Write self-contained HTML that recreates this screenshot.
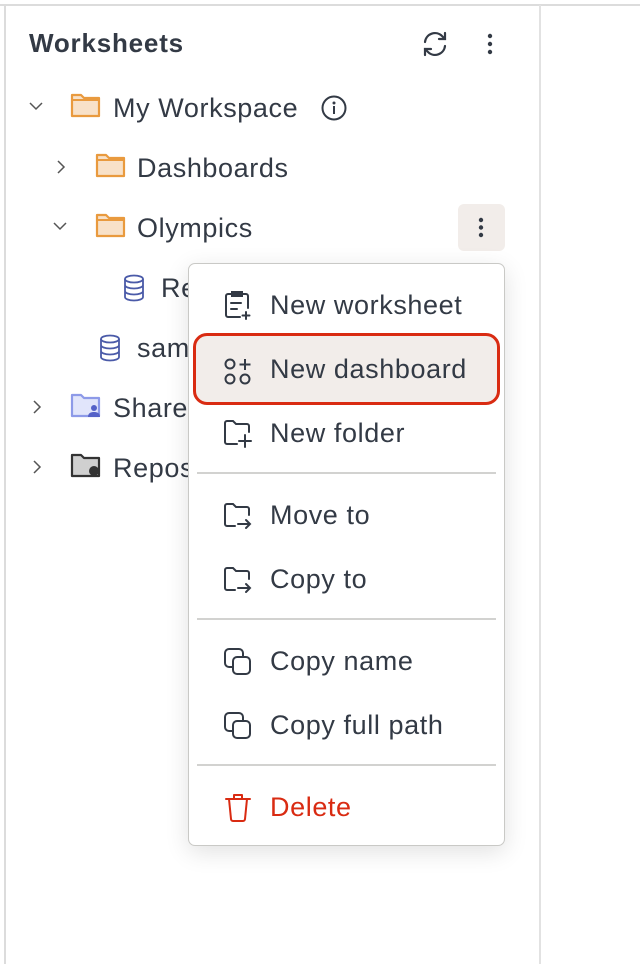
<!DOCTYPE html>
<html><head><style>
body{margin:0;width:640px;height:964px;background:#fff;font-family:"Liberation Sans",sans-serif;color:#333a45;position:relative;overflow:hidden}
.topb{position:absolute;left:0;top:4px;width:640px;height:2px;background:#dcdcdc}
.lb{position:absolute;left:4px;top:5px;width:2px;height:959px;background:#dcdcdc}
.rb{position:absolute;left:539px;top:5px;width:2px;height:959px;background:#e2e2e2}
.t{position:absolute;font-size:27px;letter-spacing:0.6px;line-height:30px;white-space:nowrap}
svg{position:absolute;overflow:visible}
.menu{position:absolute;left:188px;top:263px;width:315px;height:581px;border:1.5px solid #c9c9c6;border-radius:7px;background:#fff;box-shadow:0 6px 24px rgba(0,0,0,.12);overflow:hidden}
.div{position:absolute;left:8px;width:299px;height:2px;background:#d2d2d0}
.hl{position:absolute;left:4px;top:69px;width:301px;height:66px;border:3px solid #d92b12;border-radius:14px;background:#f2edea}
.mi{position:absolute;left:81px;font-size:27px;letter-spacing:0.6px;line-height:30px;white-space:nowrap}
</style></head><body>
<div class="topb"></div><div class="lb"></div><div class="rb"></div>
<div class="t" style="left:29px;top:28px;font-weight:bold;font-size:26px;letter-spacing:0.8px">Worksheets</div>
<svg style="left:420px;top:29px" width="30" height="30" viewBox="0 0 30 30" fill="none" stroke="#333a45" stroke-width="2.2" stroke-linecap="round"><path d="M5 13a10 10 0 0 1 17-6l3 3M25 17a10 10 0 0 1-17 6l-3-3"/><path d="M25 4v6h-6M5 26v-6h6"/></svg>
<svg style="left:486px;top:33px" width="8" height="24"><circle cx="4" cy="3" r="2.2" fill="#333a45"/><circle cx="4" cy="11" r="2.2" fill="#333a45"/><circle cx="4" cy="19" r="2.2" fill="#333a45"/></svg>

<svg style="left:29px;top:101px" width="14" height="10"><path d="M1 2l6 6 6-6" stroke="#555" stroke-width="1.5" fill="none"/></svg>
<svg style="left:71px;top:92px" width="30" height="26"><path d="M1 3h9l3 3h15v18H1z" fill="#f8e1c8" stroke="#e99a3e" stroke-width="2.2" stroke-linejoin="round"/><path d="M1 8h27" stroke="#e99a3e" stroke-width="2"/></svg>
<div class="t" style="left:113px;top:93px">My Workspace</div>
<svg style="left:321px;top:95px" width="26" height="26"><circle cx="13" cy="13" r="11.5" stroke="#333a45" stroke-width="2" fill="none"/><circle cx="13" cy="8" r="1.5" fill="#333a45"/><path d="M13 11v8" stroke="#333a45" stroke-width="2"/></svg>

<svg style="left:56px;top:160px" width="10" height="14"><path d="M2 1l6 6-6 6" stroke="#555" stroke-width="1.5" fill="none"/></svg>
<svg style="left:96px;top:152px" width="30" height="26"><path d="M1 3h9l3 3h15v18H1z" fill="#f8e1c8" stroke="#e99a3e" stroke-width="2.2" stroke-linejoin="round"/><path d="M1 8h27" stroke="#e99a3e" stroke-width="2"/></svg>
<div class="t" style="left:137px;top:153px">Dashboards</div>

<svg style="left:53px;top:221px" width="14" height="10"><path d="M1 2l6 6 6-6" stroke="#555" stroke-width="1.5" fill="none"/></svg>
<svg style="left:96px;top:212px" width="30" height="26"><path d="M1 3h9l3 3h15v18H1z" fill="#f8e1c8" stroke="#e99a3e" stroke-width="2.2" stroke-linejoin="round"/><path d="M1 8h27" stroke="#e99a3e" stroke-width="2"/></svg>
<div class="t" style="left:137px;top:213px">Olympics</div>
<div style="position:absolute;left:458px;top:204px;width:47px;height:47px;background:#f2edea;border-radius:6px"></div>
<svg style="left:477px;top:217px" width="8" height="24"><circle cx="4" cy="3" r="2.2" fill="#333a45"/><circle cx="4" cy="10.5" r="2.2" fill="#333a45"/><circle cx="4" cy="18" r="2.2" fill="#333a45"/></svg>

<svg style="left:123px;top:274px" width="22" height="28" viewBox="0 0 22 28" fill="none" stroke="#4a5aa8" stroke-width="1.8"><ellipse cx="11" cy="5" rx="9" ry="3.5"/><path d="M2 5v18c0 2 4 3.5 9 3.5s9-1.5 9-3.5V5M2 11c0 2 4 3.5 9 3.5s9-1.5 9-3.5M2 17c0 2 4 3.5 9 3.5s9-1.5 9-3.5"/></svg>
<div class="t" style="left:161px;top:273px">Re</div>
<svg style="left:99px;top:334px" width="22" height="28" viewBox="0 0 22 28" fill="none" stroke="#4a5aa8" stroke-width="1.8"><ellipse cx="11" cy="5" rx="9" ry="3.5"/><path d="M2 5v18c0 2 4 3.5 9 3.5s9-1.5 9-3.5V5M2 11c0 2 4 3.5 9 3.5s9-1.5 9-3.5M2 17c0 2 4 3.5 9 3.5s9-1.5 9-3.5"/></svg>
<div class="t" style="left:137px;top:333px">sam</div>

<svg style="left:32px;top:400px" width="10" height="14"><path d="M2 1l6 6-6 6" stroke="#555" stroke-width="1.5" fill="none"/></svg>
<svg style="left:71px;top:392px" width="30" height="26"><path d="M1 3h9l3 3h15v18H1z" fill="#e1e5fb" stroke="#8d9ae8" stroke-width="2.2" stroke-linejoin="round"/><circle cx="23" cy="16" r="3" fill="#5562c8"/><path d="M17 25c0-4 3-5 6-5s6 1 6 5z" fill="#5562c8"/></svg>
<div class="t" style="left:113px;top:393px">Share</div>

<svg style="left:32px;top:460px" width="10" height="14"><path d="M2 1l6 6-6 6" stroke="#555" stroke-width="1.5" fill="none"/></svg>
<svg style="left:71px;top:452px" width="30" height="26"><path d="M1 3h9l3 3h15v18H1z" fill="#d0d0d0" stroke="#333" stroke-width="2.2" stroke-linejoin="round"/><circle cx="23" cy="19" r="5" fill="#333"/></svg>
<div class="t" style="left:113px;top:453px">Repos</div>

<div class="menu">
 <svg style="left:35px;top:26px" width="28" height="30" viewBox="0 0 28 30" fill="none" stroke="#333a45" stroke-width="2" stroke-linecap="round"><path d="M16 27H4a2 2 0 0 1-2-2V6a2 2 0 0 1 2-2h18a2 2 0 0 1 2 2v12"/><path d="M8 2h10v4H8z"/><path d="M7 13h10M7 19h6M22 22v7M18.5 25.5h7"/></svg>
 <div class="mi" style="top:26px">New worksheet</div>
 <div class="hl"></div>
 <svg style="left:35px;top:94px" width="28" height="28" viewBox="0 0 28 28" fill="none" stroke="#333a45" stroke-width="2"><circle cx="6" cy="6" r="4.5"/><circle cx="6" cy="21" r="4.5"/><circle cx="21" cy="21" r="4.5"/><path d="M21 1v11M15.5 6.5h11"/></svg>
 <div class="mi" style="top:90px">New dashboard</div>
 <svg style="left:34px;top:155px" width="30" height="28" viewBox="0 0 30 28" fill="none" stroke="#333a45" stroke-width="2" stroke-linecap="round"><path d="M14 25H4a2 2 0 0 1-2-2V4a2 2 0 0 1 2-2h6l3 3h11a2 2 0 0 1 2 2v6"/><path d="M22 16v12M16 22h12"/></svg>
 <div class="mi" style="top:154px">New folder</div>
 <div class="div" style="top:208px"></div>
 <svg style="left:34px;top:238px" width="30" height="28" viewBox="0 0 30 28" fill="none" stroke="#333a45" stroke-width="2" stroke-linecap="round"><path d="M12 24H4a2 2 0 0 1-2-2V4a2 2 0 0 1 2-2h6l3 3h11a2 2 0 0 1 2 2v6"/><path d="M15 22h12M23 18l4 4-4 4"/></svg>
 <div class="mi" style="top:236px">Move to</div>
 <svg style="left:34px;top:302px" width="30" height="28" viewBox="0 0 30 28" fill="none" stroke="#333a45" stroke-width="2" stroke-linecap="round"><path d="M12 24H4a2 2 0 0 1-2-2V4a2 2 0 0 1 2-2h6l3 3h11a2 2 0 0 1 2 2v6"/><path d="M15 22h12M23 18l4 4-4 4"/></svg>
 <div class="mi" style="top:300px">Copy to</div>
 <div class="div" style="top:354px"></div>
 <svg style="left:34px;top:383px" width="30" height="30" viewBox="0 0 30 30" fill="none" stroke="#333a45" stroke-width="2"><path d="M9 20H6a4 4 0 0 1-4-4V6a4 4 0 0 1 4-4h10a4 4 0 0 1 4 4v3"/><rect x="10" y="10" width="17" height="17" rx="4"/></svg>
 <div class="mi" style="top:382px">Copy name</div>
 <svg style="left:34px;top:447px" width="30" height="30" viewBox="0 0 30 30" fill="none" stroke="#333a45" stroke-width="2"><path d="M9 20H6a4 4 0 0 1-4-4V6a4 4 0 0 1 4-4h10a4 4 0 0 1 4 4v3"/><rect x="10" y="10" width="17" height="17" rx="4"/></svg>
 <div class="mi" style="top:446px">Copy full path</div>
 <div class="div" style="top:500px"></div>
 <svg style="left:36px;top:529px" width="26" height="30" viewBox="0 0 26 30" fill="none" stroke="#d92b12" stroke-width="2" stroke-linecap="round" stroke-linejoin="round"><path d="M1 6h24M9 6V2h8v4M4 6l2 20a2 2 0 0 0 2 2h10a2 2 0 0 0 2-2l2-20"/></svg>
 <div class="mi" style="top:528px;color:#d92b12">Delete</div>
</div>
</body></html>
